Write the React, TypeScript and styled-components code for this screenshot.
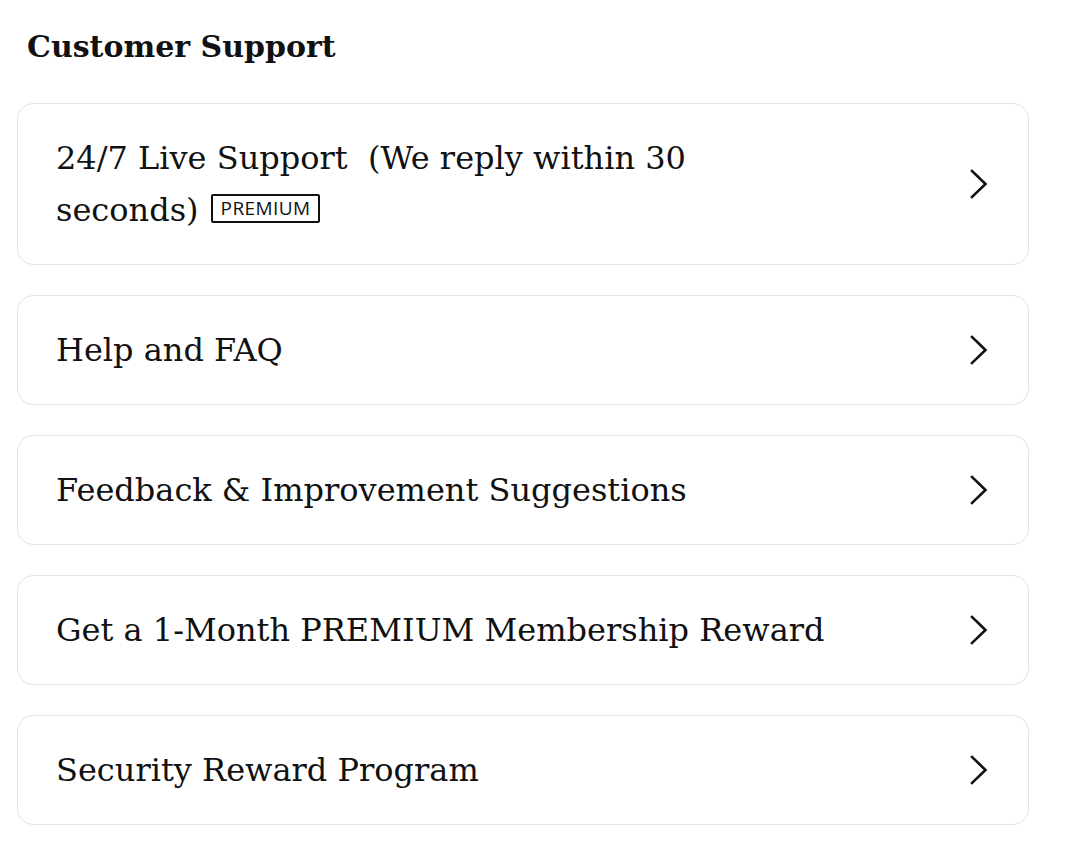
import styled, { createGlobalStyle } from 'styled-components';

const GlobalStyle = createGlobalStyle`
  body {
    margin: 0;
    background: #ffffff;
    font-family: "DejaVu Serif", "Liberation Serif", serif;
    color: #111111;
  }
`;

const Page = styled.div`
  padding: 25px 39px 0 17px;
`;

const Title = styled.h2`
  margin: 0 0 34px 10px;
  font-size: 30px;
  font-weight: 700;
  line-height: 44px;
`;

const List = styled.div`
  display: flex;
  flex-direction: column;
  gap: 30px;
`;

const Card = styled.div`
  display: flex;
  align-items: center;
  justify-content: space-between;
  padding: 28px 40px 28px 38px;
  border: 1px solid #e3e3e3;
  border-radius: 16px;
  background: #fff;
  cursor: pointer;
`;

const Label = styled.div`
  max-width: 800px;
  font-size: 32px;
  line-height: 52px;
`;

const Tail = styled.span`
  white-space: nowrap;
`;

const Badge = styled.span`
  display: inline-block;
  margin-left: 12px;
  padding: 0 8px;
  border: 2px solid #111;
  border-radius: 2px;
  font-family: "Open Sans", "Liberation Sans", sans-serif;
  font-size: 19px;
  line-height: 25px;
  letter-spacing: 0.4px;
  vertical-align: 6px;
`;

const Chevron = () => (
  <svg width="18" height="30" viewBox="0 0 18 30" fill="none">
    <polyline
      points="2,2 15.5,15 2,28"
      stroke="#111"
      strokeWidth="2.6"
      strokeLinecap="square"
      strokeLinejoin="miter"
    />
  </svg>
);

type Item = { label: string; tail?: string; badge?: string };

const items: Item[] = [
  { label: '24/7 Live Support\u00a0 (We reply within 30 ', tail: 'seconds)', badge: 'PREMIUM' },
  { label: 'Help and FAQ' },
  { label: 'Feedback & Improvement Suggestions' },
  { label: 'Get a 1-Month PREMIUM Membership Reward' },
  { label: 'Security Reward Program' },
];

export default function App() {
  return (
    <>
      <GlobalStyle />
      <Page>
        <Title>Customer Support</Title>
        <List>
          {items.map((item) => (
            <Card key={item.label}>
              <Label>
                {item.label}
                {item.tail && (
                  <Tail>
                    {item.tail}
                    {item.badge && <Badge>{item.badge}</Badge>}
                  </Tail>
                )}
              </Label>
              <Chevron />
            </Card>
          ))}
        </List>
      </Page>
    </>
  );
}
